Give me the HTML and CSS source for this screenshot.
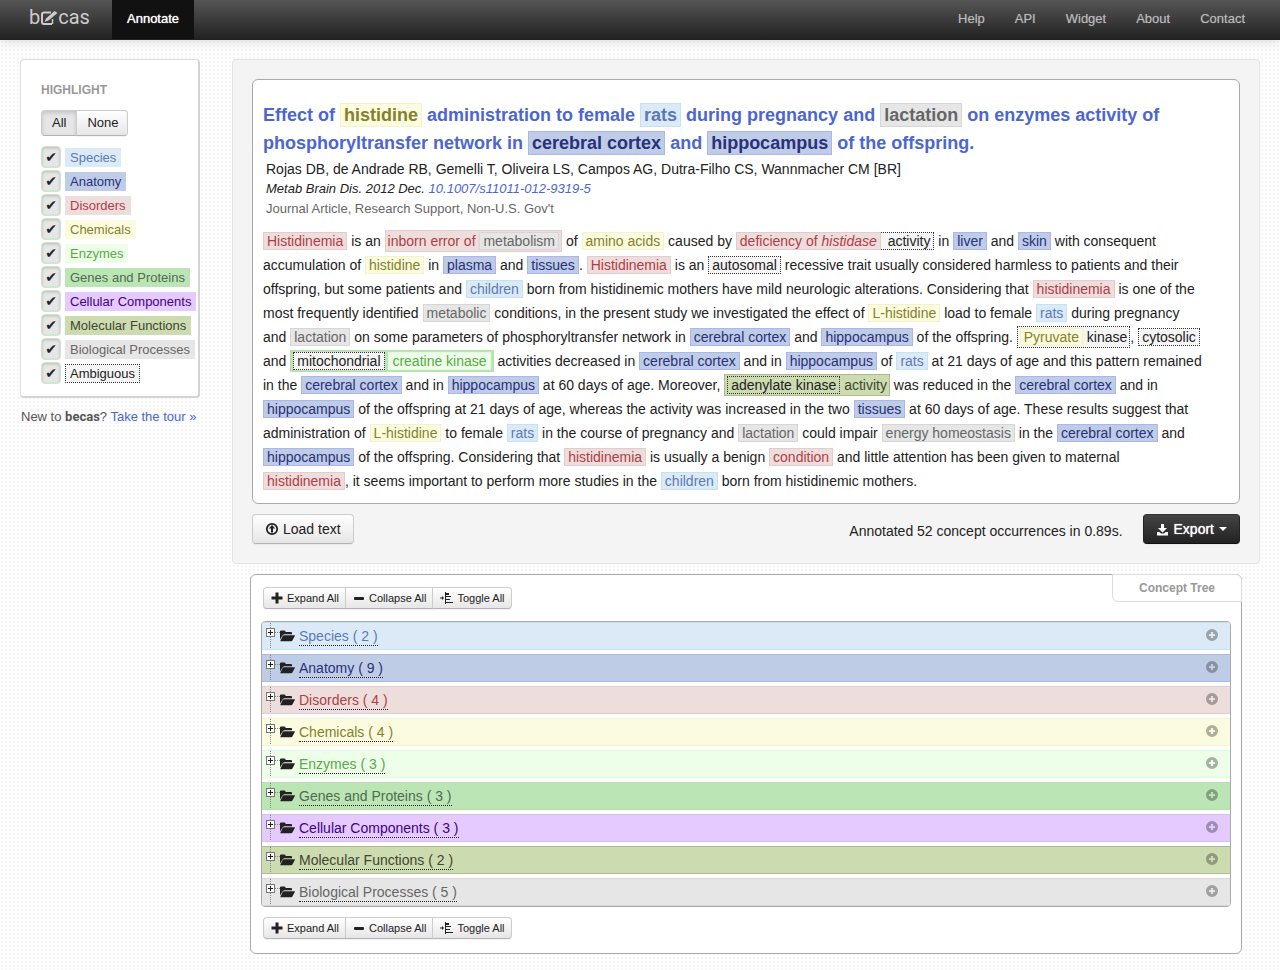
FILE: index.html
```html
<!DOCTYPE html>
<html lang="en">
<head>
<meta charset="utf-8">
<title>becas – Annotate</title>
<link rel="stylesheet" href="styles.css">
</head>
<body>
<svg class="defs" aria-hidden="true">
  <symbol id="folder" viewBox="0 0 15 12"><path d="M0 9.500V1.500Q0 .5 1 .5H4.500Q5.500.5 5.500 1.500V2H11Q12 2 12 3V4.200H4.500Q3.300 4.200 2.700 5.200Z"/><path d="M3.700 5.200H14.500Q15.300 5.200 14.800 6.100L12.400 10.500Q11.900 11.300 11 11.300H.8Q0 11.300.5 10.400L2.800 5.800Q3.100 5.200 3.700 5.200Z"/></symbol>
  <symbol id="plus-circle" viewBox="0 0 12 12"><path fill-rule="evenodd" d="M6 0A6 6 0 1 1 6 12A6 6 0 0 1 6 0ZM5 3V5H3V7H5V9H7V7H9V5H7V3Z"/></symbol>
  <symbol id="plus" viewBox="0 0 12 12"><path d="M4.500.5H7.500V4.500H11.500V7.500H7.500V11.500H4.500V7.500H.5V4.500H4.500Z"/></symbol>
  <symbol id="minus" viewBox="0 0 12 12"><rect x="1" y="5" width="10" height="3" rx="1"/></symbol>
  <symbol id="toggle" viewBox="0 0 13 12"><path d="M0 5.500H2V4L4 6L2 8V6.500H0ZM5 0H6V12H5ZM6 1H9V3H6ZM6 4H11V5H6ZM6 7H10V8H6ZM6 10H13V11H6Z"/></symbol>
</svg>

<header class="navbar">
  <a class="brand" href="#" aria-label="becas"><span>b</span><svg width="18" height="14" viewBox="0 0 18 14"><path d="M11 1.500H4Q2 1.500 2 3.500V11Q2 13 4 13H12" fill="none" stroke="currentColor" stroke-width="2"/><path d="M4.500 11L6 7.500L14.500 0L17.500 2L8.500 9.500Z" fill="currentColor"/><path d="M12.500 8V13" stroke="currentColor" stroke-width="1.500"/></svg><span>cas</span></a>
  <a class="nav-link active" href="#">Annotate</a>
  <nav class="nav-right">
    <a class="nav-link" href="#">Help</a>
    <a class="nav-link" href="#">API</a>
    <a class="nav-link" href="#">Widget</a>
    <a class="nav-link" href="#">About</a>
    <a class="nav-link" href="#">Contact</a>
  </nav>
</header>

<div class="layout">
  <aside class="sidebar">
    <section class="filters">
      <h2>Highlight</h2>
      <div class="group"><button class="btn pressed" type="button">All</button><button class="btn" type="button">None</button></div>
      <ul>
        <li><input type="checkbox" id="c1" checked><label for="c1" class="tag species">Species</label></li>
        <li><input type="checkbox" id="c2" checked><label for="c2" class="tag anatomy">Anatomy</label></li>
        <li><input type="checkbox" id="c3" checked><label for="c3" class="tag disorder">Disorders</label></li>
        <li><input type="checkbox" id="c4" checked><label for="c4" class="tag chemical">Chemicals</label></li>
        <li><input type="checkbox" id="c5" checked><label for="c5" class="tag enzyme">Enzymes</label></li>
        <li><input type="checkbox" id="c6" checked><label for="c6" class="tag gene">Genes and Proteins</label></li>
        <li><input type="checkbox" id="c7" checked><label for="c7" class="tag cell">Cellular Components</label></li>
        <li><input type="checkbox" id="c8" checked><label for="c8" class="tag molecular">Molecular Functions</label></li>
        <li><input type="checkbox" id="c9" checked><label for="c9" class="tag process">Biological Processes</label></li>
        <li><input type="checkbox" id="c10" checked><label for="c10" class="tag ambiguous">Ambiguous</label></li>
      </ul>
    </section>
    <p class="tour">New to <b>becas</b>? <a href="#">Take the tour »</a></p>
  </aside>

  <main class="content">
    <section class="panel">
      <article class="document">
        <h1>Effect of <span class="a chemical">histidine</span> administration to female <span class="a species">rats</span> during pregnancy and <span class="a process">lactation</span> on enzymes activity of<br>
        phosphoryltransfer network in <span class="a anatomy">cerebral cortex</span> and <span class="a anatomy">hippocampus</span> of the offspring.</h1>
        <p class="authors">Rojas DB, de Andrade RB, Gemelli T, Oliveira LS, Campos AG, Dutra-Filho CS, Wannmacher CM [BR]</p>
        <p class="journal">Metab Brain Dis. 2012 Dec. <a href="#">10.1007/s11011-012-9319-5</a></p>
        <p class="kind">Journal Article, Research Support, Non-U.S. Gov't</p>
        <p class="abstract"><span class="a disorder">Histidinemia</span> is an <span class="a disorder outer">inborn error of <span class="a process">metabolism</span></span> of <span class="a chemical">amino acids</span> caused by <span class="a disorder">deficiency of <i>histidase</i></span><span class="a ambiguous joined"> activity</span> in <span class="a anatomy">liver</span> and <span class="a anatomy">skin</span> with consequent<br>
        accumulation of <span class="a chemical">histidine</span> in <span class="a anatomy">plasma</span> and <span class="a anatomy">tissues</span>. <span class="a disorder">Histidinemia</span> is an <span class="a ambiguous">autosomal</span> recessive trait usually considered harmless to patients and their<br>
        offspring, but some patients and <span class="a species">children</span> born from histidinemic mothers have mild neurologic alterations. Considering that <span class="a disorder">histidinemia</span> is one of the<br>
        most frequently identified <span class="a process">metabolic</span> conditions, in the present study we investigated the effect of <span class="a chemical">L-histidine</span> load to female <span class="a species">rats</span> during pregnancy<br>
        and <span class="a process">lactation</span> on some parameters of phosphoryltransfer network in <span class="a anatomy">cerebral cortex</span> and <span class="a anatomy">hippocampus</span> of the offspring. <span class="a ambiguous outer"><span class="a chemical">Pyruvate</span> kinase</span>, <span class="a ambiguous">cytosolic</span><br>
        and <span class="a gene outer"><span class="a ambiguous">mitochondrial</span> <span class="a enzyme">creatine kinase</span></span> activities decreased in <span class="a anatomy">cerebral cortex</span> and in <span class="a anatomy">hippocampus</span> of <span class="a species">rats</span> at 21 days of age and this pattern remained<br>
        in the <span class="a anatomy">cerebral cortex</span> and in <span class="a anatomy">hippocampus</span> at 60 days of age. Moreover, <span class="a molecular outer"><span class="a ambiguous clear">adenylate kinase</span> activity</span> was reduced in the <span class="a anatomy">cerebral cortex</span> and in<br>
        <span class="a anatomy">hippocampus</span> of the offspring at 21 days of age, whereas the activity was increased in the two <span class="a anatomy">tissues</span> at 60 days of age. These results suggest that<br>
        administration of <span class="a chemical">L-histidine</span> to female <span class="a species">rats</span> in the course of pregnancy and <span class="a process">lactation</span> could impair <span class="a process">energy homeostasis</span> in the <span class="a anatomy">cerebral cortex</span> and<br>
        <span class="a anatomy">hippocampus</span> of the offspring. Considering that <span class="a disorder">histidinemia</span> is usually a benign <span class="a disorder">condition</span> and little attention has been given to maternal<br>
        <span class="a disorder">histidinemia</span>, it seems important to perform more studies in the <span class="a species">children</span> born from histidinemic mothers.</p>
      </article>
      <div class="actions">
        <button class="btn large" type="button"><svg width="14" height="14" viewBox="0 0 14 14"><circle cx="7" cy="7" r="5.200" fill="none" stroke="currentColor" stroke-width="1.800"/><path d="M7 3L10.200 6.500H8V10.500H6V6.500H3.800Z"/></svg>Load text</button>
        <span class="status">Annotated 52 concept occurrences in 0.89s.</span>
        <button class="btn large dark" type="button"><svg width="13" height="13" viewBox="0 0 13 13"><path d="M5 1H8V5H11L6.500 9.500L2 5H5ZM1 9H3.500L5 10.500H8L9.500 9H12V12.500H1Z"/></svg>Export<svg class="caret" width="8" height="4" viewBox="0 0 8 4"><path d="M0 0H8L4 4Z"/></svg></button>
      </div>
    </section>

    <section class="tree">
      <h2 class="tree-title">Concept Tree</h2>
      <div class="group small">
        <button class="btn" type="button"><svg width="12" height="12"><use href="#plus"/></svg>Expand All</button><button class="btn" type="button"><svg width="12" height="12"><use href="#minus"/></svg>Collapse All</button><button class="btn" type="button"><svg width="13" height="12"><use href="#toggle"/></svg>Toggle All</button>
      </div>
      <ul class="concepts">
        <li class="species"><button class="twig" type="button" aria-label="Expand"></button><svg class="folder"><use href="#folder"/></svg><a href="#">Species ( 2 )</a><svg class="more"><use href="#plus-circle"/></svg></li>
        <li class="anatomy"><button class="twig" type="button" aria-label="Expand"></button><svg class="folder"><use href="#folder"/></svg><a href="#">Anatomy ( 9 )</a><svg class="more"><use href="#plus-circle"/></svg></li>
        <li class="disorder"><button class="twig" type="button" aria-label="Expand"></button><svg class="folder"><use href="#folder"/></svg><a href="#">Disorders ( 4 )</a><svg class="more"><use href="#plus-circle"/></svg></li>
        <li class="chemical"><button class="twig" type="button" aria-label="Expand"></button><svg class="folder"><use href="#folder"/></svg><a href="#">Chemicals ( 4 )</a><svg class="more"><use href="#plus-circle"/></svg></li>
        <li class="enzyme"><button class="twig" type="button" aria-label="Expand"></button><svg class="folder"><use href="#folder"/></svg><a href="#">Enzymes ( 3 )</a><svg class="more"><use href="#plus-circle"/></svg></li>
        <li class="gene"><button class="twig" type="button" aria-label="Expand"></button><svg class="folder"><use href="#folder"/></svg><a href="#">Genes and Proteins ( 3 )</a><svg class="more"><use href="#plus-circle"/></svg></li>
        <li class="cell"><button class="twig" type="button" aria-label="Expand"></button><svg class="folder"><use href="#folder"/></svg><a href="#">Cellular Components ( 3 )</a><svg class="more"><use href="#plus-circle"/></svg></li>
        <li class="molecular"><button class="twig" type="button" aria-label="Expand"></button><svg class="folder"><use href="#folder"/></svg><a href="#">Molecular Functions ( 2 )</a><svg class="more"><use href="#plus-circle"/></svg></li>
        <li class="process"><button class="twig" type="button" aria-label="Expand"></button><svg class="folder"><use href="#folder"/></svg><a href="#">Biological Processes ( 5 )</a><svg class="more"><use href="#plus-circle"/></svg></li>
      </ul>
      <div class="group small">
        <button class="btn" type="button"><svg width="12" height="12"><use href="#plus"/></svg>Expand All</button><button class="btn" type="button"><svg width="12" height="12"><use href="#minus"/></svg>Collapse All</button><button class="btn" type="button"><svg width="13" height="12"><use href="#toggle"/></svg>Toggle All</button>
      </div>
    </section>
  </main>
</div>
</body>
</html>
```
FILE: styles.css
```css
* { box-sizing: border-box; }
body {
  margin: 0;
  font: 14px/20px "Liberation Sans", Arial, sans-serif;
  color: #222;
  background: #fdfdfd radial-gradient(circle, #f5f5f5 1px, transparent 1px) 0 0 / 4px 4px;
}
h1, h2, p, ul { margin: 0; padding: 0; }
ul { list-style: none; }
a { color: #4b66d0; text-decoration: none; }
svg { fill: currentColor; flex: none; }
.defs { position: absolute; width: 0; height: 0; }

/* Top bar */
.navbar {
  display: flex;
  height: 40px;
  padding: 0 20px 0 29px;
  background: linear-gradient(#555, #222);
  border-bottom: 1px solid #222;
  box-shadow: 0 1px 10px rgba(0, 0, 0, .15);
}
.brand {
  display: flex;
  align-items: center;
  width: 83px;
  padding-bottom: 6px;
  font: 20px/34px Roboto, sans-serif;
  color: #ccc;
}
.brand svg { margin-top: 3px; }
.nav-link {
  padding: 0 15px;
  font-size: 13px;
  line-height: 38px;
  color: #bbb;
  text-shadow: 0 0 1px #777;
}
.nav-link.active { background: #111; color: #fff; text-shadow: 0 0 1px #fff; }
.nav-right { display: flex; margin-left: auto; }

/* Page columns */
.layout {
  display: grid;
  grid-template-columns: 180px minmax(0, 1fr);
  gap: 32px;
  align-items: start;
  padding: 19px 20px 16px;
}
.filters {
  padding: 20px 0 11px 20px;
  background: #fff;
  border: 1px solid #ddd;
  border-right: 2px solid #d4d4d4;
  border-bottom: 2px solid #d4d4d4;
  border-radius: 4px;
}
.filters h2 { margin-bottom: 10px; font-size: 12px; line-height: 20px; color: #999; text-transform: uppercase; }
.filters ul { margin-top: 9px; }
.filters li { display: flex; align-items: center; gap: 4px; height: 24px; }
.filters input {
  appearance: none;
  display: grid;
  place-items: center;
  width: 20px;
  height: 22px;
  margin: 0;
  border: 1px solid #cde8c4;
  border-radius: 4px;
  background: #e6e6e6;
  box-shadow: inset 0 1px 3px rgba(0, 0, 0, .2);
}
.filters input:checked::before { content: "✔"; font: 14px/20px "DejaVu Sans", sans-serif; color: #222; }
.tag { padding: 0 4px; border: 1px solid; font-size: 13px; line-height: 17px; white-space: nowrap; }
.filters .tag:not(.ambiguous) { border-color: transparent; }
.tour { margin: 9px 0 0 1px; font-size: 13px; color: #555; white-space: nowrap; }
.tour b { font-family: Roboto, sans-serif; }

/* Buttons */
.group { display: flex; }
.btn {
  display: inline-flex;
  align-items: center;
  padding: 0 8px 0 10px;
  height: 26px;
  border: 1px solid #ccc;
  border-bottom-color: #b3b3b3;
  background: linear-gradient(#fff, #e6e6e6);
  border-radius: 4px;
  font: 13px/20px "Liberation Sans", Arial, sans-serif;
  color: #222;
  box-shadow: 0 1px 1px rgba(0, 0, 0, .05);
}
.btn.pressed { padding: 0 10px; background: #e6e6e6; box-shadow: inset 0 2px 4px rgba(0, 0, 0, .15); }
.group .btn + .btn { margin-left: -1px; }
.group .btn:not(:first-child) { border-top-left-radius: 0; border-bottom-left-radius: 0; }
.group .btn:not(:last-child) { border-top-right-radius: 0; border-bottom-right-radius: 0; }
.group.small .btn { height: 22px; padding: 0 6px 0 7px; gap: 4px; font-size: 11px; }
.btn.large { height: 30px; padding: 0 12px; gap: 4px; font-size: 14px; }
.btn.large.dark {
  gap: 5px;
  color: #fff;
  background: linear-gradient(#444, #222);
  border-color: #333 #222 #111;
  text-shadow: 0 0 1px #fff;
}

/* Document */
.panel { padding: 19px; background: #f4f4f4; border: 1px solid #e3e3e3; border-radius: 4px; }
.document { padding: 21px 9px 10px 10px; background: #fff; border: 1px solid #aaa; border-radius: 6px; }
.document h1 { margin-bottom: 2px; font-size: 18px; line-height: 28px; color: #4b66d0; }
.authors, .journal, .kind { padding-left: 3px; }
.journal { font-size: 13px; font-style: italic; }
.kind { font-size: 13px; color: #666; }
.abstract { margin-top: 10px; line-height: 24px; }
.actions { display: flex; align-items: center; margin-top: 10px; }
.status { margin: 4px 20px 0 auto; }

/* Annotations */
.a { padding: 0 3px; border: 1px solid; }
.a.outer { padding: 2px; }
.a.joined { border-left: 0; white-space: pre-wrap; }
h1 .a { padding: 1px 3px; }
.species { background: #dceaf7; border-color: #c2e3f0; color: #5a7ab5; }
.anatomy { background: #bfcce6; border-color: #adb5ec; color: #29307c; }
.disorder { background: #eedddd; border-color: #e2cccc; color: #b03d45; }
.chemical { background: #fbfcdf; border-color: #f3f2c8; color: #85802b; }
.enzyme { background: #edffe9; border-color: #e0fadb; color: #5aa847; }
.gene { background: #bce5b6; border-color: #b5e0ad; color: #4e6b4e; }
.cell { background: #e4caff; border-color: #d8bcf5; color: #430082; }
.molecular { background: #ccdbb0; border-color: #afba8d; color: #40462f; }
.process { background: #e6e6e6; border-color: #d6d6d6; color: #666; }
.ambiguous { background: #f5f5f5; border: 1px dotted #333; color: #222; }
.ambiguous.clear { background: none; }

/* Concept tree */
.tree { position: relative; margin: 10px 18px 0; padding: 12px 10px 14px; background: #fff; border: 1px solid #aaa; border-radius: 6px; }
.tree-title {
  position: absolute;
  top: -1px;
  right: -1px;
  padding: 0 26px;
  font-size: 12px;
  line-height: 26px;
  color: #999;
  background: #fff;
  border: 1px solid #ddd;
  border-radius: 0 6px 0 6px;
}
.tree .group { margin-left: 2px; }
.concepts {
  display: grid;
  gap: 4px;
  margin: 12px 0 10px;
  border: 1px solid #aaa;
  border-radius: 4px;
  overflow: hidden;
}
.concepts li { display: flex; align-items: center; height: 28px; padding: 0 12px 0 4px; border-width: 1px 0; border-style: solid; }
.concepts a { margin-left: 4px; line-height: 18px; color: inherit; border-bottom: 1px dotted #222; }
.twig {
  align-self: stretch;
  width: 14px;
  padding: 0;
  border: 0;
  background:
    linear-gradient(#222, #222) 4px 7px / 1px 5px no-repeat,
    linear-gradient(#222, #222) 2px 9px / 5px 1px no-repeat,
    linear-gradient(#fff, #fff) 1px 6px / 7px 7px no-repeat,
    linear-gradient(#777, #777) 0 5px / 9px 9px no-repeat,
    repeating-linear-gradient(90deg, #888 0 1px, transparent 1px 2px) 9px 9px / 5px 1px no-repeat,
    repeating-linear-gradient(#888 0 1px, transparent 1px 2px) 4px 0 / 1px 100% no-repeat;
}
.folder { width: 15px; height: 12px; color: #222; }
.more { width: 12px; height: 12px; margin: 0 0 2px auto; color: #222; opacity: .35; }
```
